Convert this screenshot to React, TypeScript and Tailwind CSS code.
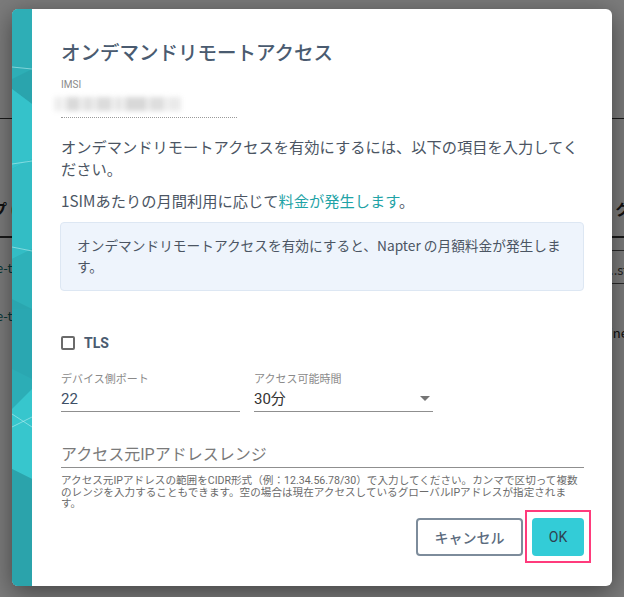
const JP = '"Noto Sans CJK JP", "Noto Sans", sans-serif';
const RB = 'Roboto, "Noto Sans CJK JP", sans-serif';

function TealBand() {
  return (
    <svg width="20" height="577" viewBox="0 0 20 577" className="block shrink-0" preserveAspectRatio="none">
      <rect x="0" y="0" width="20" height="577" fill="#2fb3bb" />
      <polygon points="0,0 20,0 20,60 0,70" fill="#2eaeb6" />
      <polygon points="0,70 20,60 20,95 0,80" fill="#2aa4ad" />
      <polygon points="0,80 20,95 20,150 0,160" fill="#35c2ca" />
      <polygon points="0,160 20,150 20,240 0,250" fill="#33bdc5" />
      <polygon points="0,250 20,240 20,300 0,290" fill="#2eb1b9" />
      <polygon points="0,290 20,300 20,370 0,360" fill="#2aa6af" />
      <polygon points="0,300 20,300 20,400 0,400" fill="#2ca9b2" opacity="0.6" />
      <polygon points="0,400 20,380 20,470 0,460" fill="#37c6cd" />
      <polygon points="0,460 20,470 20,577 0,577" fill="#2ba3ab" />
      <line x1="0" y1="58" x2="20" y2="60" stroke="#bfeff2" strokeWidth="0.7" opacity="0.8" />
      <line x1="0" y1="155" x2="20" y2="152" stroke="#bfeff2" strokeWidth="0.7" opacity="0.8" />
      <line x1="0" y1="238" x2="20" y2="242" stroke="#bfeff2" strokeWidth="0.7" opacity="0.8" />
      <line x1="0" y1="418" x2="20" y2="408" stroke="#bfeff2" strokeWidth="0.7" opacity="0.8" />
      <line x1="0" y1="405" x2="20" y2="418" stroke="#bfeff2" strokeWidth="0.7" opacity="0.8" />
    </svg>
  );
}

// the page under the dim overlay: only its edges show beside the dialog
function BackgroundPage() {
  return (
    <div className="absolute inset-0 bg-[#f6f6f6]" style={{ fontFamily: JP }}>
      <div className="absolute left-0 right-0 top-[118px] h-px bg-[#333]" />
      <div className="absolute left-[-8px] top-[198px] text-[15px] font-bold text-[#222]">プ (</div>
      <div className="absolute right-[-6px] top-[198px] text-[15px] font-bold text-[#222]">ク</div>
      <div className="absolute left-0 right-0 top-[236px] h-[2px] bg-[#333]" />
      <div className="absolute right-0 w-[30px] top-[250px] h-px bg-[#555]" />
      <div className="absolute left-[-4px] top-[258px] text-[13px] text-[#0b6f6f]">e-t</div>
      <div className="absolute right-[-4px] top-[260px] text-[13px] text-[#444]">..st</div>
      <div className="absolute right-0 w-[30px] top-[283px] h-px bg-[#555]" />
      <div className="absolute left-[-4px] top-[306px] text-[13px] text-[#0b6f6f]">e-t</div>
      <div className="absolute right-[-4px] top-[323px] text-[13px] text-[#222]">ine</div>
    </div>
  );
}

export default function App() {
  return (
    <div className="relative w-[624px] h-[597px] overflow-hidden">
      <BackgroundPage />
      <div className="absolute inset-0 bg-black/50 flex justify-center pt-[9px]">
        <div className="w-[600px] h-[577px] flex rounded-[6px] overflow-hidden bg-white shadow-[0_6px_24px_rgba(0,0,0,0.45)]">
          <TealBand />
          <div className="flex-1 min-w-0 flex flex-col pl-[29px] pr-[28px] pt-[29px]" style={{ fontFamily: JP }}>
            <h2 className="text-[19.5px] leading-[28px] font-medium text-[#4a5b70]">
              オンデマンドリモートアクセス
            </h2>

            <div className="mt-[12px] text-[10px] leading-[14px] text-[#8a8a8a]" style={{ fontFamily: RB }}>
              IMSI
            </div>
            {/* masked IMSI value */}
            <div className="h-[20px] mt-[2px] -ml-[7px] w-[127px] flex items-center gap-[2px] blur-[2.5px]">
              <div className="h-[14px] w-[10px] bg-[#eeeeee]" />
              <div className="h-[14px] w-[14px] bg-[#dadada]" />
              <div className="h-[14px] w-[12px] bg-[#e2e2e2]" />
              <div className="h-[14px] w-[16px] bg-[#dcdcdc]" />
              <div className="h-[14px] w-[10px] bg-[#e6e6e6]" />
              <div className="h-[14px] w-[22px] bg-[#d8d8d8]" />
              <div className="h-[14px] w-[16px] bg-[#dedede]" />
              <div className="h-[14px] w-[14px] bg-[#eaeaea]" />
            </div>
            <div className="w-[176px] mt-[3px] border-b border-dotted border-[#9a9a9a]" />

            <p className="mt-[17px] text-[15.25px] leading-[22px] text-[#4b5563] whitespace-nowrap">
              オンデマンドリモートアクセスを有効にするには、以下の項目を入力してく
              <br />
              ださい。
            </p>
            <p className="mt-[10px] text-[15.25px] leading-[22px] text-[#4b5563]">
              1SIMあたりの月間利用に応じて<span className="text-[#1fa3a6]">料金が発生します</span>。
            </p>

            <div className="mt-[11px] -ml-px h-[69px] rounded-[4px] border border-[#dde7f3] bg-[#eef4fc] pl-[16px] pr-[8px] pt-[12px]">
              <p className="text-[13.7px] leading-[21px] text-[#4b5563] whitespace-nowrap">
                オンデマンドリモートアクセスを有効にすると、Napter の月額料金が発生しま
                <br />
                す。
              </p>
            </div>

            <label className="mt-[43px] flex items-center gap-[9px]">
              <span className="w-[14px] h-[14px] rounded-[2px] border-2 border-[#6b6b6b]" />
              <span className="text-[14px] leading-[18px] font-bold text-[#4a5b70]" style={{ fontFamily: RB }}>
                TLS
              </span>
            </label>

            <div className="mt-[21px] flex gap-[14px]" style={{ fontFamily: RB }}>
              <div className="w-[179px] flex flex-col">
                <span className="text-[11px] leading-[14px] text-[#8a8a8a]">デバイス側ポート</span>
                <div className="mt-[1px] h-[21px] flex items-center border-b border-[#8f8f8f] pb-[2px] box-content">
                  <span className="text-[15px] leading-[20px] text-[#3d4f66]">22</span>
                </div>
              </div>
              <div className="w-[179px] flex flex-col">
                <span className="text-[11px] leading-[14px] text-[#8a8a8a]">アクセス可能時間</span>
                <div className="mt-[1px] h-[21px] flex items-center justify-between border-b border-[#8f8f8f] pb-[2px] box-content">
                  <span className="text-[15px] leading-[20px] text-[#333]">30分</span>
                  <svg width="10" height="5" viewBox="0 0 10 5" className="mr-[3px]">
                    <polygon points="0,0 10,0 5,5" fill="#757575" />
                  </svg>
                </div>
              </div>
            </div>

            <div className="mt-[33px] flex flex-col" style={{ fontFamily: RB }}>
              <div className="h-[23px] border-b border-[#8f8f8f] text-[16px] leading-[20px] text-[#7a7a7a]">
                アクセス元IPアドレスレンジ
              </div>
              <p className="mt-[7px] text-[10.6px] leading-[11.5px] text-[#6b6b6b] whitespace-nowrap">
                アクセス元IPアドレスの範囲をCIDR形式（例：12.34.56.78/30）で入力してください。カンマで区切って複数
                <br />
                のレンジを入力することもできます。空の場合は現在アクセスしているグローバルIPアドレスが指定されま
                <br />
                す。
              </p>
            </div>

            <div className="mt-auto mb-[30px] flex justify-end gap-[9px]">
              <button className="w-[107px] h-[38px] rounded-[4px] border-2 border-[#7d8c9b] text-[14px] font-medium text-[#5b6b7e] bg-white">
                キャンセル
              </button>
              <div className="relative">
                <button className="w-[52px] h-[38px] rounded-[4px] bg-[#33ccd7] text-[14px] text-[#2f3f50]" style={{ fontFamily: RB }}>
                  OK
                </button>
                <div className="absolute -left-[7px] -right-[7px] -top-[8px] -bottom-[7px] border-2 border-[#ff3b7c] pointer-events-none" />
              </div>
            </div>
          </div>
        </div>
      </div>
    </div>
  );
}
